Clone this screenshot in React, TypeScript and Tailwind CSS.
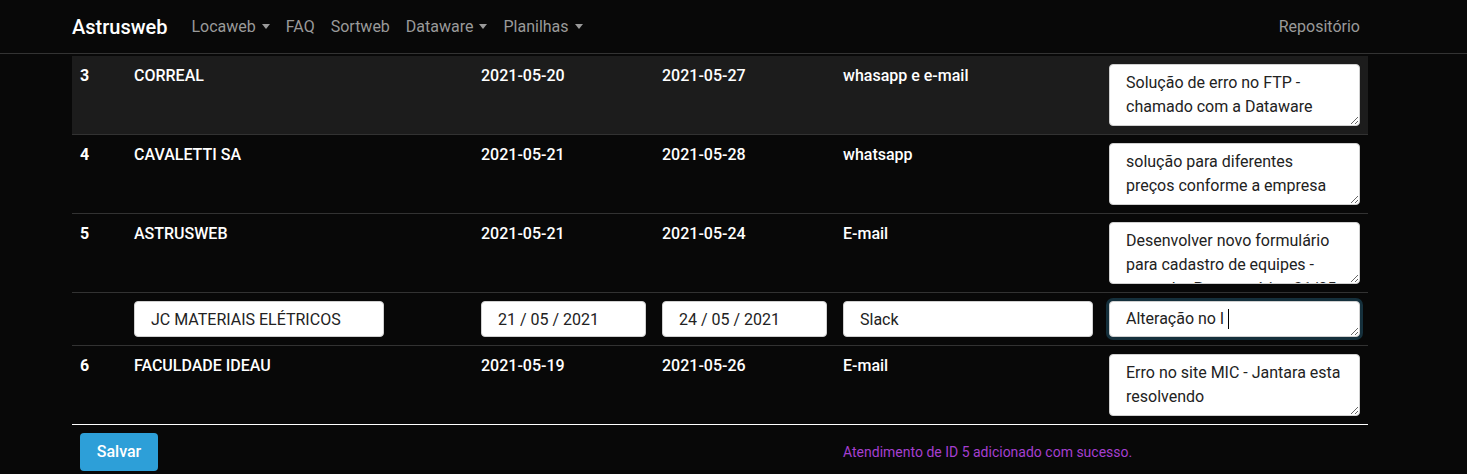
import React from "react";

const cols = "grid grid-cols-[54px_347px_181px_181px_266px_267px]";

function Caret() {
  return (
    <span className="ml-[6px] inline-block h-0 w-0 border-x-[4px] border-t-[5px] border-x-transparent border-t-current align-[3px]" />
  );
}

function NoteBox({ text }: { text: string }) {
  return (
    <textarea
      readOnly
      value={text}
      className="block h-[62px] w-[251px] resize-y overflow-hidden rounded-[4px] border border-[#d0d0d0] bg-white px-4 py-[6px] text-[16px] font-normal leading-[24px] text-[#222] outline-none"
    />
  );
}

type Row = { id: string; name: string; d1: string; d2: string; via: string; note: string; striped?: boolean; last?: boolean };

function DataRow({ r }: { r: Row }) {
  return (
    <div
      className={`${cols} border-b ${r.last ? "border-white" : "border-[#323232]"} ${r.striped ? "bg-[#1c1c1c]" : ""} text-[16px] font-medium leading-[24px] text-white`}
    >
      <div className="px-2 py-2 font-bold">{r.id}</div>
      <div className="px-2 py-2">{r.name}</div>
      <div className="px-2 py-2">{r.d1}</div>
      <div className="px-2 py-2">{r.d2}</div>
      <div className="px-2 py-2">{r.via}</div>
      <div className="px-2 py-2">
        <NoteBox text={r.note} />
      </div>
    </div>
  );
}

export default function App() {
  const rows: Row[] = [
    { id: "3", name: "CORREAL", d1: "2021-05-20", d2: "2021-05-27", via: "whasapp e e-mail", note: "Solução de erro no FTP - chamado com a Dataware", striped: true },
    { id: "4", name: "CAVALETTI SA", d1: "2021-05-21", d2: "2021-05-28", via: "whatsapp", note: "solução para diferentes preços conforme a empresa" },
    { id: "5", name: "ASTRUSWEB", d1: "2021-05-21", d2: "2021-05-24", via: "E-mail", note: "Desenvolver novo formulário para cadastro de equipes - aguardar Programática 21/05" },
  ];
  const last: Row = { id: "6", name: "FACULDADE IDEAU", d1: "2021-05-19", d2: "2021-05-26", via: "E-mail", note: "Erro no site MIC - Jantara esta resolvendo", last: true };

  const inputCls =
    "block h-[36px] rounded-[4px] border border-[#d0d0d0] bg-white px-4 text-[16px] text-[#222] outline-none";

  return (
    <div className="min-h-[474px] bg-[#080808] font-[Roboto,'Liberation_Sans',sans-serif]">
      <nav className="h-[54px] border-b border-[#333]">
        <div className="ml-[72px] flex h-[53px] w-[1296px] items-center">
          <span className="mr-4 text-[20px] font-medium text-white">Astrusweb</span>
          <div className="flex items-center text-[16px] text-[#9a9a9a]">
            <span className="px-2">Locaweb<Caret /></span>
            <span className="px-2">FAQ</span>
            <span className="px-2">Sortweb</span>
            <span className="px-2">Dataware<Caret /></span>
            <span className="px-2">Planilhas<Caret /></span>
          </div>
          <span className="ml-auto px-2 text-[16px] text-[#9a9a9a]">Repositório</span>
        </div>
      </nav>

      <div className="ml-[72px] w-[1296px] pt-[2px]">
        {rows.map((r) => (
          <DataRow key={r.id} r={r} />
        ))}
        <div className={`${cols} border-b border-[#323232]`}>
          <div className="px-2 py-2" />
          <div className="px-2 py-2">
            <input readOnly value="JC MATERIAIS ELÉTRICOS" className={`${inputCls} w-[250px]`} />
          </div>
          <div className="px-2 py-2">
            <input readOnly value="21 / 05 / 2021" className={`${inputCls} w-[165px]`} />
          </div>
          <div className="px-2 py-2">
            <input readOnly value="24 / 05 / 2021" className={`${inputCls} w-[165px]`} />
          </div>
          <div className="px-2 py-2">
            <input readOnly value="Slack" className={`${inputCls} w-[250px]`} />
          </div>
          <div className="px-2 py-2">
            <div className="relative w-[251px]">
              <textarea
                readOnly
                value="Alteração no l"
                className="block h-[36px] w-[251px] resize-y overflow-hidden rounded-[4px] border border-[#d0d0d0] bg-white px-4 py-[5px] text-[16px] leading-[24px] text-[#222] shadow-[0_0_0_3px_#15303c] outline-none"
              />
              <span className="absolute left-[119px] top-[8px] h-[20px] w-px bg-black" />
            </div>
          </div>
        </div>
        <DataRow r={last} />

        <div className={`${cols} mt-2 items-center`}>
          <div className="col-span-4 px-2">
            <button className="h-[38px] w-[78px] rounded-[4px] bg-[#2d9fd8] text-[16px] font-medium text-white">
              Salvar
            </button>
          </div>
          <div className="col-span-2 px-2 text-[14px] text-[#a53fd0]">
            Atendimento de ID 5 adicionado com sucesso.
          </div>
        </div>
      </div>
    </div>
  );
}
